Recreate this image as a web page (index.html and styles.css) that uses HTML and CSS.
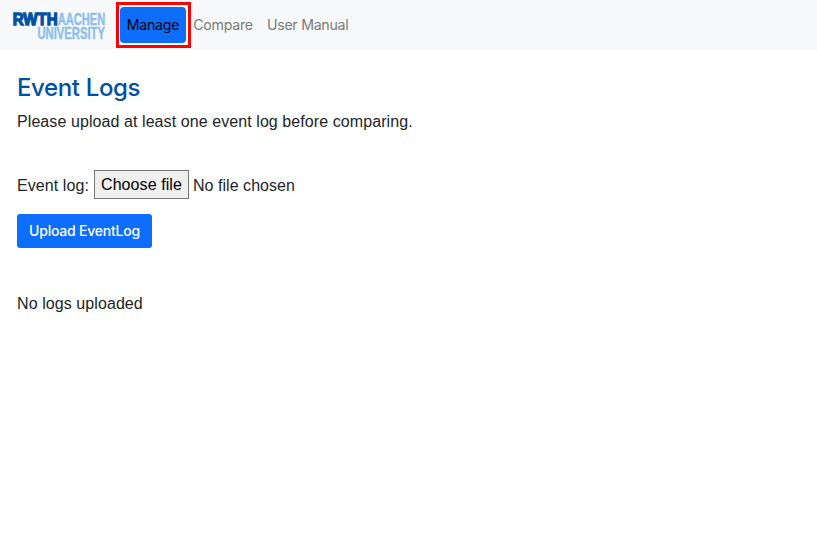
FILE: index.html
```html
<!DOCTYPE html>
<html lang="en">
<head>
<meta charset="utf-8">
<title>Event Logs</title>
<link rel="stylesheet" href="styles.css">
</head>
<body>
<nav class="navbar">
  <svg class="logo" viewBox="0 0 93 28" role="img" aria-label="RWTH Aachen University">
    <text class="logo-dark" x="-.3" y="12" textLength="45" lengthAdjust="spacingAndGlyphs">RWTH</text>
    <text class="logo-light" x="44.8" y="12" textLength="47.4" lengthAdjust="spacingAndGlyphs">AACHEN</text>
    <text class="logo-light" x="24.5" y="25.8" textLength="67.5" lengthAdjust="spacingAndGlyphs">UNIVERSITY</text>
  </svg>
  <div class="highlight"><a class="nav-link active">Manage</a></div>
  <a class="nav-link compare">Compare</a>
  <a class="nav-link">User Manual</a>
</nav>
<main class="content">
  <h1 class="title">Event Logs</h1>
  <p class="lead">Please upload at least one event log before comparing.</p>
  <form class="upload">
    <div class="file-row">
      <label>Event log:</label>
      <button type="button" class="choose">Choose file</button>
      <span class="status">No file chosen</span>
    </div>
    <button type="button" class="submit">Upload EventLog</button>
  </form>
  <p class="empty">No logs uploaded</p>
</main>
</body>
</html>
```
FILE: styles.css
```css
* { box-sizing: border-box; }
body {
  margin: 0;
  background: #fff;
  color: #212529;
  font: 16px/24px "Liberation Sans", Arial, sans-serif;
  letter-spacing: .08px;
}
.navbar {
  display: flex;
  align-items: center;
  height: 50px;
  padding-left: 13px;
  background: #f8f9fa;
}
.logo { width: 93px; height: 28px; margin: 3px 10px 0 0; overflow: visible; }
.logo text { font-family: "Liberation Sans", sans-serif; font-size: 16.5px; font-weight: 700; letter-spacing: 0; }
.logo-dark { fill: #0050a5; stroke: #0050a5; stroke-width: 1.3px; }
.logo-light { fill: #8ebfec; stroke: #8ebfec; stroke-width: .5px; }
.highlight {
  height: 46px;
  width: 75px;
  border: 3px solid #f00;
  padding: 2px 2px 2px 1px;
}
.nav-link {
  font: 14.2px/36px Inter, sans-serif;
  letter-spacing: -.28px;
  color: #7a7b7c;
  padding: 0 7.2px;
}
.compare { margin-left: -5px; padding-right: 7px; }
.highlight .nav-link { padding: 0; }
.active {
  display: block;
  width: 66px;
  height: 36px;
  border-radius: 4px;
  background: #0d6efd;
  color: #000;
  text-align: center;
}
.content { padding: 23px 17px 0; }
.title {
  margin: 0 0 7px;
  color: #0050a5;
  font: 500 24px/30px Inter, sans-serif;
  letter-spacing: -.37px;
}
.lead { margin: 0 0 36px; }
.file-row { display: flex; align-items: center; height: 29px; white-space: pre; }
.file-row label, .status { padding-top: 2px; }
.status { letter-spacing: .04px; }
.choose {
  width: 95px;
  height: 29px;
  margin: 0 4px 0 5px;
  padding: 0;
  border: 1px solid #767676;
  border-radius: 0;
  background: #efefef;
  color: #000;
  font: 16px/24px "Liberation Sans", Arial, sans-serif;
  letter-spacing: .08px;
}
.submit {
  display: block;
  width: 135px;
  height: 34px;
  margin-top: 15px;
  padding: 0;
  border: 0;
  border-radius: 3px;
  background: #0d6efd;
  color: #fff;
  font: 500 14px/34px Inter, sans-serif;
  letter-spacing: -.22px;
}
.empty { margin: 44px 0 0; }
```
